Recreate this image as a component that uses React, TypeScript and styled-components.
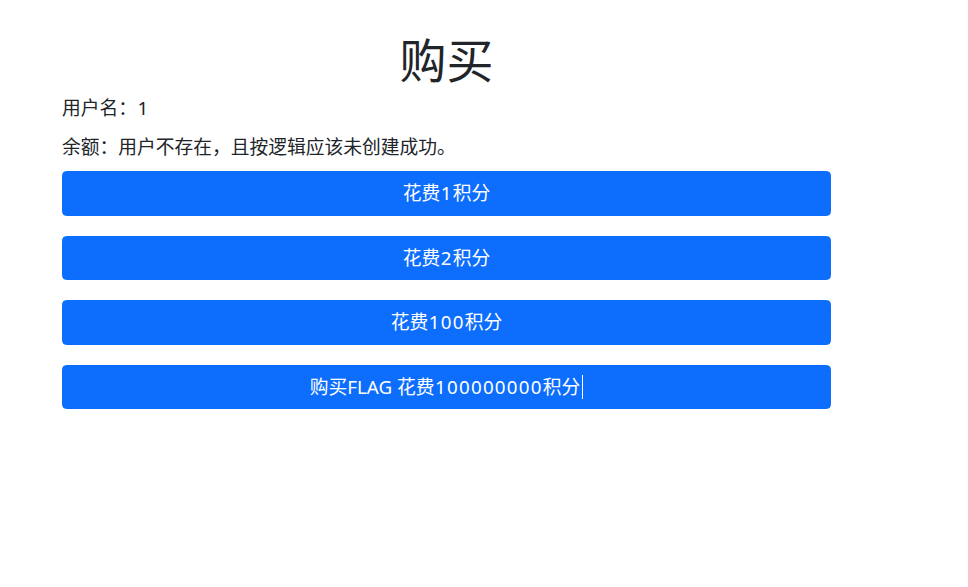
import React from "react";
import styled, { createGlobalStyle } from "styled-components";

const Global = createGlobalStyle`
  html, body { margin: 0; padding: 0; background: #fff; }
  body {
    font-family: "Noto Sans", "Noto Sans CJK SC", sans-serif;
    color: #212529;
  }
`;

const Page = styled.div`
  padding: 30px 0 0 62px;
`;

const Container = styled.div`
  width: 769px;
  display: flex;
  flex-direction: column;
`;

const Title = styled.h1`
  margin: 0 0 8px;
  font-size: 47px;
  line-height: 56px;
  font-weight: 400;
  text-align: center;
  font-family: "Noto Sans CJK SC", sans-serif;
  color: #212529;
`;

const Line = styled.div<{ $gap: number }>`
  font-size: 18.75px;
  line-height: 28px;
  margin-bottom: ${(p) => p.$gap}px;
`;

const Num = styled.span`
  letter-spacing: 0.066em;
  padding-left: 0.03em;
`;

const Buttons = styled.div`
  display: flex;
  flex-direction: column;
  gap: 20px;
`;

const Button = styled.button`
  display: flex;
  align-items: center;
  justify-content: center;
  height: 44.5px;
  width: 100%;
  padding: 0;
  border: 1px solid #0d6efd;
  border-radius: 4.5px;
  background: #0d6efd;
  color: #fff;
  font-family: "Noto Sans", "Noto Sans CJK SC", sans-serif;
  font-size: 18.75px;
  line-height: 28px;
  white-space: pre;
  cursor: pointer;
`;

const Caret = styled.span`
  display: inline-block;
  width: 1px;
  height: 24px;
  margin-left: 2px;
  background: #fff;
  vertical-align: middle;
`;

const items = [
  { pre: "花费", num: "1", post: "积分" },
  { pre: "花费", num: "2", post: "积分" },
  { pre: "花费", num: "100", post: "积分" },
];

export default function App() {
  return (
    <>
      <Global />
      <Page>
        <Container>
          <Title>购买</Title>
          <Line $gap={11}>
            用户名：<Num>1</Num>
          </Line>
          <Line $gap={10}>余额：用户不存在，且按逻辑应该未创建成功。</Line>
          <Buttons>
            {items.map((t) => (
              <Button key={t.num}>
                {t.pre}
                <Num>{t.num}</Num>
                {t.post}
              </Button>
            ))}
            <Button>
              {"购买FLAG 花费"}
              <Num>100000000</Num>
              积分
              <Caret />
            </Button>
          </Buttons>
        </Container>
      </Page>
    </>
  );
}
